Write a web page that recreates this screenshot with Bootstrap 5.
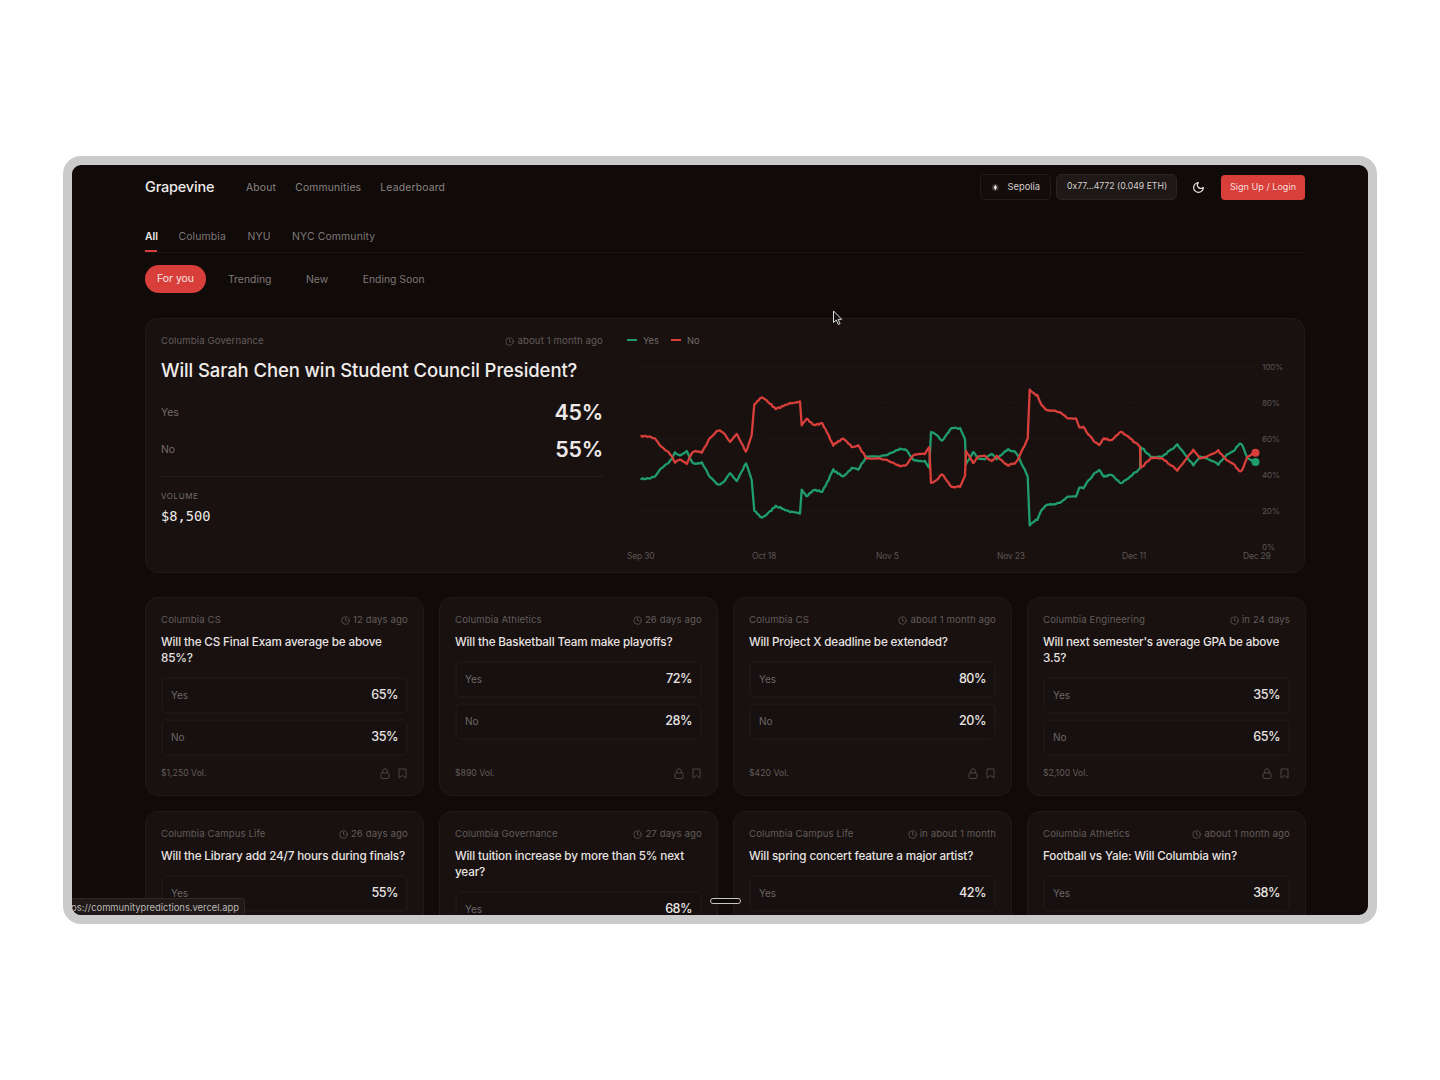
<!DOCTYPE html>
<html lang="en">
<head>
<meta charset="utf-8">
<title>Grapevine</title>
<link href="https://cdn.jsdelivr.net/npm/bootstrap@5.3.0/dist/css/bootstrap.min.css" rel="stylesheet">
<style>
html,body{background:#fff;height:1080px;overflow:hidden}
body{font-family:Inter,"Liberation Sans",sans-serif;padding-top:156px}
.gv-frame{position:relative;width:1314px;height:768px;margin:0 auto;border:9px solid #cbcbcb;border-radius:18px;background:#100a09;overflow:hidden;color:#f2eeec}
.gv-nav{height:44px;padding:0 63px 0 73px}
.gv-brand{font-size:14.5px;font-weight:500;color:#efeae8;letter-spacing:-.2px;width:101px;margin-top:-1px}
.gv-navlinks{column-gap:19px}
.gv-navlink{font-size:10.3px;color:#8a8482;text-decoration:none;letter-spacing:.22px;padding-top:2px}
.gv-chip{height:26px;border:1px solid #231c1b;border-radius:5px;font-size:9.3px;color:#d5d0ce;padding:0 10px;background:#120c0b;white-space:nowrap;flex:none}
.gv-chip-sep{width:71px}
.gv-chip-alt{width:121px;margin-left:5px;background:#1e1817;border-color:#2a2322;font-size:8.7px}
.gv-moon{margin:0 16px 0 15px;flex:none}
.gv-signup{background:#d93f3a;color:#f5dedd;font-size:9.1px;width:84px;height:25px;border-radius:4px;border:0;padding:0;white-space:nowrap}
.gv-main{padding:0 62px 0 73px}
.gv-tabs{height:44px;padding-top:20px;border-bottom:1px solid #1c1514;gap:21.5px;font-size:10.4px;color:#7f7876;margin-right:1px;letter-spacing:.15px}
.gv-tab{height:23px;line-height:15px}
.gv-tab-on{color:#efeae8;font-weight:600;border-bottom:2px solid #d93f3a;width:12px;letter-spacing:0}
.gv-pills{height:28px;margin-top:12px;font-size:10.4px;color:#7f7876;line-height:14px}
.gv-pill-on{background:#d93f3a;color:#f6e6e4;border-radius:14px;width:61px;height:28px;margin-right:22px}
.gv-sort{margin-right:34.5px;padding-top:1px}
.gv-hero{height:255px;margin-top:25px;background:#181110;border:1px solid #211a19;border-radius:13px;padding:0 15px;margin-right:1px}
.gv-heroleft{width:442px;padding-top:16px;flex:none}
.gv-meta{font-size:9.6px;color:#625c5a;line-height:12px;letter-spacing:.12px}
.gv-meta svg{margin-right:3px;vertical-align:-1.5px}
.gv-herotitle{font-size:18.5px;font-weight:500;letter-spacing:-.1px;line-height:24px;margin:11px 0 12px;color:#f0ecea;white-space:nowrap}
.gv-herorow{height:37.5px;font-size:10.4px;color:#716b69}
.gv-heropct{font-size:21.4px;font-weight:600;color:#eee9e7;letter-spacing:-.2px;padding-bottom:2px}
.gv-rule{border-top:1px solid #241d1c;margin-top:7px;padding-top:14px}
.gv-vol{font-size:8px;letter-spacing:.6px;color:#716b69;line-height:10px}
.gv-volval{font-family:"DejaVu Sans Mono",monospace;font-size:13.7px;color:#eee9e7;line-height:18px;margin-top:6px}
.gv-heroright{margin-left:24px;width:662px;padding-top:16px;flex:none}
.gv-legend{font-size:9.3px;color:#716b69;line-height:12px;gap:12px}
.gv-swatch{width:10px;height:2px;display:inline-block;margin-right:6px;vertical-align:3px}
.gv-chart{display:block;margin:0}
.gv-chart text{font-family:Inter,"Liberation Sans",sans-serif;font-size:8.5px;fill:#5b5553;letter-spacing:-.2px}
.gv-chart .gv-ytick{font-size:8.2px}
.gv-grid{display:grid;grid-template-columns:repeat(4,279px);gap:15px;margin-top:24px}
.gv-mcard{height:199px;background:#181110;border:1px solid #211a19;border-radius:13px;padding:16px 15px 14px;display:flex;flex-direction:column}
.gv-q{font-size:11.7px;font-weight:500;line-height:16px;color:#e8e3e1;margin:8px 0 11px;letter-spacing:-.15px}
.gv-opt{height:37px;border:2px solid #1d1615;border-radius:6px;background:#161010;padding:0 8px;font-size:10px;color:#6d6765;margin-bottom:5px}
.gv-opt b{font-size:12.6px;font-weight:500;color:#e8e3e1;letter-spacing:-.5px}
.gv-foot{margin-top:auto;font-size:8.7px;color:#625c5a;height:14px}
.gv-ico{margin:0 1px 2px 0}
.gv-ico svg{display:block}
.gv-status{position:absolute;left:-9px;bottom:0;width:182px;height:17px;background:#1f1918;border:1px solid #2e2726;border-left:0;border-bottom:0;border-radius:0 4px 0 0;font-size:9.4px;line-height:18px;color:#bdb8b6;text-align:right;padding-right:5px;white-space:nowrap;overflow:hidden}
.gv-handle{position:absolute;left:638px;top:733px;width:31px;height:6px;border:1px solid #c9c5c3;border-radius:3px;background:#0c0807}
.gv-cursor{position:absolute;left:760px;top:145px}
</style>
</head>
<body>
<div class="gv-frame">
  <nav class="gv-nav d-flex align-items-center">
    <div class="gv-brand">Grapevine</div>
    <div class="d-flex gv-navlinks flex-grow-1">
      <a class="gv-navlink" href="#">About</a><a class="gv-navlink" href="#">Communities</a><a class="gv-navlink" href="#">Leaderboard</a>
    </div>
    <div class="d-flex align-items-center">
      <div class="gv-chip gv-chip-sep d-flex align-items-center">
        <svg width="9" height="9" viewBox="0 0 9 9" class="me-2"><circle cx="4.5" cy="4.5" r="3.6" fill="#3a3432"/><path d="M4.5 1.5 6.2 4.6 4.5 7.5 2.8 4.6Z" fill="#e8e4e2"/></svg>
        <span>Sepolia</span>
      </div>
      <div class="gv-chip gv-chip-alt d-flex align-items-center">0x77...4772 (0.049 ETH)</div>
      <svg class="gv-moon" width="13" height="13" viewBox="0 0 24 24" fill="none" stroke="#e8e4e2" stroke-width="2.2" stroke-linecap="round" stroke-linejoin="round"><path d="M12 3a6 6 0 0 0 9 9 9 9 0 1 1-9-9Z"/></svg>
      <button class="gv-signup btn">Sign Up / Login</button>
    </div>
  </nav>
  <div class="gv-main">
    <div class="gv-tabs d-flex">
      <div class="gv-tab gv-tab-on">All</div><div class="gv-tab">Columbia</div><div class="gv-tab">NYU</div><div class="gv-tab">NYC Community</div>
    </div>
    <div class="gv-pills d-flex align-items-center">
      <div class="gv-pill-on d-flex align-items-center justify-content-center">For you</div>
      <div class="gv-sort">Trending</div><div class="gv-sort">New</div><div class="gv-sort">Ending Soon</div>
    </div>
    <section class="gv-hero d-flex">
      <div class="gv-heroleft">
        <div class="d-flex justify-content-between gv-meta"><span>Columbia Governance</span><span><svg width="9" height="9" viewBox="0 0 24 24" fill="none" stroke="currentColor" stroke-width="2" stroke-linecap="round"><circle cx="12" cy="12" r="10"/><path d="M12 6v6l4 2"/></svg>about 1 month ago</span></div>
        <div class="gv-herotitle">Will Sarah Chen win Student Council President?</div>
        <div class="gv-herorow d-flex justify-content-between align-items-center"><span>Yes</span><span class="gv-heropct">45%</span></div>
        <div class="gv-herorow d-flex justify-content-between align-items-center"><span>No</span><span class="gv-heropct">55%</span></div>
        <div class="gv-rule"><div class="gv-vol">VOLUME</div><div class="gv-volval">$8,500</div></div>
      </div>
      <div class="gv-heroright">
        <div class="gv-legend d-flex"><span><i class="gv-swatch" style="background:#1f9d6c"></i>Yes</span><span><i class="gv-swatch" style="background:#d93f3a"></i>No</span></div>
        <svg class="gv-chart" id="chart" width="662" height="215" viewBox="627 347 662 215">
          <g stroke="#1d1615" stroke-width="1">
            <path d="M640 367H1256M640 403H1256M640 439H1256M640 475H1256M640 511H1256M640 547H1256"/>
            <path d="M763 367V547M886 367V547M1010 367V547M1133 367V547M1256 367V547" stroke-dasharray="2 3"/>
          </g>
          <g id="lines" fill="none" stroke-width="2.3" stroke-linejoin="round"></g>
          <circle cx="1255.5" cy="462" r="4" fill="#1f9d6c"/><circle cx="1255.5" cy="452.7" r="4" fill="#d93f3a"/>
          <text class="gv-ytick" x="1262" y="370">100%</text><text class="gv-ytick" x="1262" y="406">80%</text><text class="gv-ytick" x="1262" y="442">60%</text><text class="gv-ytick" x="1262" y="478">40%</text><text class="gv-ytick" x="1262" y="514">20%</text><text class="gv-ytick" x="1262" y="550">0%</text>
          <text x="627" y="559">Sep 30</text><text x="752" y="559">Oct 18</text><text x="876" y="559">Nov 5</text><text x="997" y="559">Nov 23</text><text x="1122" y="559">Dec 11</text><text x="1243" y="559">Dec 29</text>
        </svg>
      </div>
    </section>
    <div class="gv-grid" id="cards"></div>
  </div>
  <div class="gv-status">ps://communitypredictions.vercel.app</div>
  <div class="gv-handle"></div>
  <svg class="gv-cursor" width="12" height="16" viewBox="0 0 12 16"><path d="M1.5 1v11.5l2.8-2.5 2 4.5 1.8-.8-2-4.4h3.6Z" fill="#111" stroke="#ddd" stroke-width="1"/></svg>
</div>
<script src="https://cdn.jsdelivr.net/npm/bootstrap@5.3.0/dist/js/bootstrap.bundle.min.js"></script>
<script>
var clock='<svg width="9" height="9" viewBox="0 0 24 24" fill="none" stroke="currentColor" stroke-width="2" stroke-linecap="round"><circle cx="12" cy="12" r="10"/><path d="M12 6v6l4 2"/></svg>';
var icons='<span class="gv-ico d-flex gap-2 align-items-center"><svg width="10" height="11" viewBox="0 0 20 22" fill="none" stroke="#4a4442" stroke-width="2"><rect x="2" y="10" width="16" height="11" rx="2"/><path d="M5.5 10V6a4.5 4.5 0 0 1 9 0v4"/></svg><svg width="9" height="11" viewBox="0 0 18 22" fill="none" stroke="#4a4442" stroke-width="2" stroke-linejoin="round"><path d="M2 2h14v18l-7-5-7 5Z"/></svg></span>';
var data=[
["Columbia CS","12 days ago","Will the CS Final Exam average be above 85%?",65,35,"$1,250"],
["Columbia Athletics","26 days ago","Will the Basketball Team make playoffs?",72,28,"$890"],
["Columbia CS","about 1 month ago","Will Project X deadline be extended?",80,20,"$420"],
["Columbia Engineering","in 24 days","Will next semester's average GPA be above 3.5?",35,65,"$2,100"],
["Columbia Campus Life","26 days ago","Will the Library add 24/7 hours during finals?",55,45,"$640"],
["Columbia Governance","27 days ago","Will tuition increase by more than 5% next year?",68,32,"$3,200"],
["Columbia Campus Life","in about 1 month","Will spring concert feature a major artist?",42,58,"$1,500"],
["Columbia Athletics","about 1 month ago","Football vs Yale: Will Columbia win?",38,62,"$5,400"]];
document.getElementById('cards').innerHTML=data.map(function(d){
return '<article class="gv-mcard"><div class="d-flex justify-content-between gv-meta"><span>'+d[0]+'</span><span>'+clock+d[1]+'</span></div><div class="gv-q">'+d[2]+'</div><div class="gv-opt d-flex justify-content-between align-items-center"><span>Yes</span><b>'+d[3]+'%</b></div><div class="gv-opt d-flex justify-content-between align-items-center"><span>No</span><b>'+d[4]+'%</b></div><div class="gv-foot d-flex justify-content-between align-items-center"><span>'+d[5]+' Vol.</span>'+icons+'</div></article>';
}).join('');
var pts=[640.7,436,650,436.7,655,438.3,661.7,447.3,666.7,450.7,671.7,456,675,462.3,680,459.3,686.7,463.3,692.7,451.7,701.7,452,710,438.3,718.3,430,725,434,730,442.3,736.7,434,746,451.7,751.7,435,754.3,404,761.7,397.3,768.3,401.7,775.7,409.3,783.3,406,791.7,402.7,800,401,801.7,425.7,806.7,419.3,814,425,822.3,423.3,833.3,445,842.7,438.3,851.7,446.7,858.3,446,866.7,458.3,878.3,458.3,886.7,460,900,466,905,466,913.3,455,925,453.3,929.3,447.3,931,483.3,936.7,480,941.7,474,951.7,487.3,960,486.7,965,475,966,450.7,973.3,462.7,978.3,456.7,985,456,991.7,461.7,996.7,456,1008.3,466,1016.7,461.7,1027.7,439.3,1029.7,390,1037.3,395.7,1041.7,406,1047.3,411,1051.7,410,1060,411.7,1067.3,418.3,1076,418.3,1079.3,426.7,1083.3,426.7,1093.3,440.7,1099.3,444.3,1104,438.7,1111.7,440,1120.7,431.3,1130,438.3,1140,446,1140.7,468.3,1151.7,457.7,1161.7,458.3,1177.3,470,1186.7,458.3,1193.3,450,1200,458.3,1206.7,456.7,1218.3,450.7,1226.7,460,1233.3,463.3,1239.3,471.7,1243.3,468.3,1247.3,456.7,1255,452.7];
var seed=7;function rnd(){seed=(seed*16807)%2147483647;return seed/2147483647-.5}
var red=[],green=[];
for(var i=0;i<pts.length-2;i+=2){
  var dx=pts[i+2]-pts[i],n=Math.max(1,Math.round(dx/1.6));
  for(var k=0;k<n;k++){
    var t=k/n,x=pts[i]+dx*t,y=pts[i+1]+(pts[i+3]-pts[i+1])*t,j=(Math.abs(y-457.5)>4?1.6:.7)*rnd();
    red.push(x.toFixed(1)+','+(y+j).toFixed(1));green.push(x.toFixed(1)+','+(915-y-j).toFixed(1));
  }
}
red.push('1255,452.7');green.push('1255,462.3');
document.getElementById('lines').innerHTML='<polyline stroke="#1f9d6c" points="'+green.join(' ')+'"/><polyline stroke="#d93f3a" points="'+red.join(' ')+'"/>';
</script>
</body>
</html>
